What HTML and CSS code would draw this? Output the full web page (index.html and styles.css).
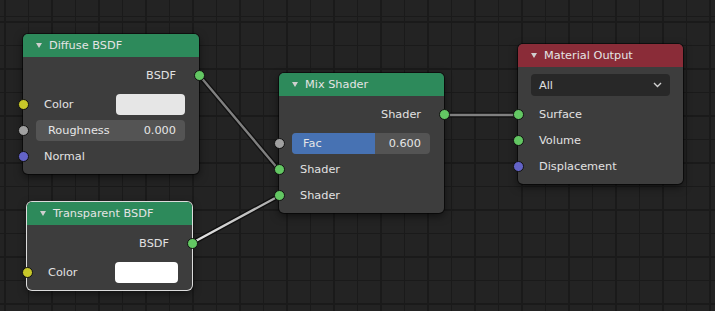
FILE: index.html
```html
<!DOCTYPE html>
<html lang="en">
<head>
    <meta charset="UTF-8">
    <title>Shader Nodes</title>
    <link rel="stylesheet" href="styles.css">
</head>
<body>
    <!-- Node editor canvas -->
    <div class="canvas">
        <svg class="links" width="715" height="311" viewBox="0 0 715 311">
            <defs>
                <linearGradient id="selLink" x1="192" y1="243" x2="279" y2="196" gradientUnits="userSpaceOnUse">
                    <stop offset="0" stop-color="#e8e8e8"/>
                    <stop offset="1" stop-color="#a8a8a8"/>
                </linearGradient>
            </defs>
            <line class="link-edge" x1="199" y1="75" x2="279" y2="170"/>
            <line class="link-core" x1="199" y1="75" x2="279" y2="170"/>
            <line class="link-edge" x1="192" y1="243" x2="279" y2="196"/>
            <line class="link-core link-active" x1="192" y1="243" x2="279" y2="196"/>
            <line class="link-edge" x1="444" y1="115" x2="518" y2="115"/>
            <line class="link-core" x1="444" y1="115" x2="518" y2="115"/>
        </svg>

        <!-- Diffuse BSDF -->
        <div class="node node-diffuse">
            <div class="node-header shader">
                <span class="caret"></span>
                <span class="node-title">Diffuse BSDF</span>
            </div>
            <div class="node-body">
                <div class="row out">
                    <span class="label">BSDF</span>
                    <span class="socket sock-shader"></span>
                </div>
                <div class="inputs">
                    <div class="row">
                        <span class="socket sock-color"></span>
                        <span class="label">Color</span>
                        <span class="swatch swatch-grey"></span>
                    </div>
                    <div class="row">
                        <span class="socket sock-float"></span>
                        <div class="field">
                            <span>Roughness</span>
                            <span>0.000</span>
                        </div>
                    </div>
                    <div class="row">
                        <span class="socket sock-vector"></span>
                        <span class="label">Normal</span>
                    </div>
                </div>
            </div>
        </div>

        <!-- Transparent BSDF (active) -->
        <div class="node node-transparent active">
            <div class="node-header shader">
                <span class="caret"></span>
                <span class="node-title">Transparent BSDF</span>
            </div>
            <div class="node-body">
                <div class="row out">
                    <span class="label">BSDF</span>
                    <span class="socket sock-shader"></span>
                </div>
                <div class="inputs">
                    <div class="row">
                        <span class="socket sock-color"></span>
                        <span class="label">Color</span>
                        <span class="swatch swatch-white"></span>
                    </div>
                </div>
            </div>
        </div>

        <!-- Mix Shader -->
        <div class="node node-mix">
            <div class="node-header shader">
                <span class="caret"></span>
                <span class="node-title">Mix Shader</span>
            </div>
            <div class="node-body">
                <div class="row out">
                    <span class="label">Shader</span>
                    <span class="socket sock-shader"></span>
                </div>
                <div class="inputs">
                    <div class="row">
                        <span class="socket sock-float"></span>
                        <div class="field slider">
                            <span class="fill" style="width: 60%;"></span>
                            <span class="field-text">Fac</span>
                            <span class="field-text">0.600</span>
                        </div>
                    </div>
                    <div class="row">
                        <span class="socket sock-shader"></span>
                        <span class="label">Shader</span>
                    </div>
                    <div class="row">
                        <span class="socket sock-shader"></span>
                        <span class="label">Shader</span>
                    </div>
                </div>
            </div>
        </div>

        <!-- Material Output -->
        <div class="node node-output">
            <div class="node-header output">
                <span class="caret"></span>
                <span class="node-title">Material Output</span>
            </div>
            <div class="node-body">
                <div class="row">
                    <div class="dropdown">
                        <span>All</span>
                        <svg class="chevron" width="9" height="6" viewBox="0 0 9 6">
                            <polyline points="1,1 4.5,4.5 8,1" fill="none" stroke="#d0d0d0" stroke-width="1.4"/>
                        </svg>
                    </div>
                </div>
                <div class="inputs">
                    <div class="row">
                        <span class="socket sock-shader"></span>
                        <span class="label">Surface</span>
                    </div>
                    <div class="row">
                        <span class="socket sock-shader"></span>
                        <span class="label">Volume</span>
                    </div>
                    <div class="row">
                        <span class="socket sock-vector"></span>
                        <span class="label">Displacement</span>
                    </div>
                </div>
            </div>
        </div>
    </div>
</body>
</html>
```

FILE: styles.css
```css
/* General body styles */
body {
    margin: 0;
    padding: 0;
    background-color: #232323;
    font-family: 'DejaVu Sans', 'Liberation Sans', sans-serif;
    font-size: 11.3px;
    color: #e2e2e2;
}

/* Node editor grid */
.canvas {
    position: relative;
    width: 715px;
    height: 311px;
    overflow: hidden;
    background-color: #232323;
    background-image:
        repeating-linear-gradient(to right, #1a1a1a 0, #1a1a1a 1.5px, transparent 1.5px, transparent 23.5px),
        repeating-linear-gradient(to bottom, #1a1a1a 0, #1a1a1a 1.5px, transparent 1.5px, transparent 23.5px);
    background-position: 4px 0, 0 21px;
}

.links {
    position: absolute;
    left: 0;
    top: 0;
}

.link-edge {
    stroke: rgba(10, 10, 10, 0.75);
    stroke-width: 5;
    stroke-linecap: round;
}

.link-core {
    stroke: #808080;
    stroke-width: 2.4;
    stroke-linecap: round;
}

.link-active {
    stroke: url(#selLink);
}

/* Nodes */
.node {
    position: absolute;
    background: #3d3d3d;
    border-radius: 5px;
    box-shadow: 0 0 0 1px rgba(0, 0, 0, 0.55), 0 3px 8px rgba(0, 0, 0, 0.55);
}

.node.active {
    box-shadow: 0 0 0 1px #dcdcdc, 0 3px 8px rgba(0, 0, 0, 0.55);
}

.node-diffuse {
    left: 23px;
    top: 34px;
    width: 176px;
}

.node-transparent {
    left: 27px;
    top: 202px;
    width: 165px;
}

.node-mix {
    left: 279px;
    top: 73px;
    width: 165px;
}

.node-output {
    left: 518px;
    top: 44px;
    width: 165px;
}

.node-header {
    height: 23px;
    display: flex;
    align-items: center;
    padding-left: 13px;
    border-radius: 5px 5px 0 0;
}

.node-header.shader {
    background: #2d8a5b;
}

.node-header.output {
    background: #8a2c38;
}

.caret {
    width: 0;
    height: 0;
    border-left: 3.5px solid transparent;
    border-right: 3.5px solid transparent;
    border-top: 5px solid #cfcfcf;
    margin-right: 7px;
}

.node-title {
    color: #e4e4e4;
}

.node-body {
    padding: 5px 0;
}

.inputs {
    margin-top: 3px;
}

/* Socket rows */
.row {
    position: relative;
    height: 26px;
    display: flex;
    align-items: center;
    padding: 0 14px 0 13px;
}

.row.out {
    justify-content: flex-end;
    padding-right: 23px;
}

.label {
    flex: 1;
    padding-left: 8px;
    white-space: nowrap;
}

.row.out .label {
    flex: none;
    padding-left: 0;
}

.socket {
    position: absolute;
    left: -5.5px;
    top: 7.5px;
    width: 9px;
    height: 9px;
    border: 1px solid #111;
    border-radius: 50%;
}

.row.out .socket {
    left: auto;
    right: -5.5px;
}

.sock-shader { background: #63c763; }
.sock-color  { background: #c7c729; }
.sock-float  { background: #a1a1a1; }
.sock-vector { background: #6363c7; }

.swatch {
    flex: 0 0 46%;
    height: 21px;
    border-radius: 4px;
}

.swatch-grey  { background: #e6e6e6; }
.swatch-white { background: #ffffff; }

.field {
    position: relative;
    flex: 1;
    height: 21px;
    display: flex;
    align-items: center;
    justify-content: space-between;
    padding: 0 9px 0 12px;
    background: #545454;
    border-radius: 4px;
    overflow: hidden;
    color: #e6e6e6;
}

.slider {
    padding-left: 11px;
}

.fill {
    position: absolute;
    left: 0;
    top: 0;
    bottom: 0;
    background: #4772b3;
}

.field-text {
    position: relative;
}

.dropdown {
    flex: 1;
    height: 22px;
    display: flex;
    align-items: center;
    justify-content: space-between;
    padding: 0 8px 0 8px;
    margin-right: -1px;
    background: #282828;
    border-radius: 4px;
    color: #e0e0e0;
}
```
